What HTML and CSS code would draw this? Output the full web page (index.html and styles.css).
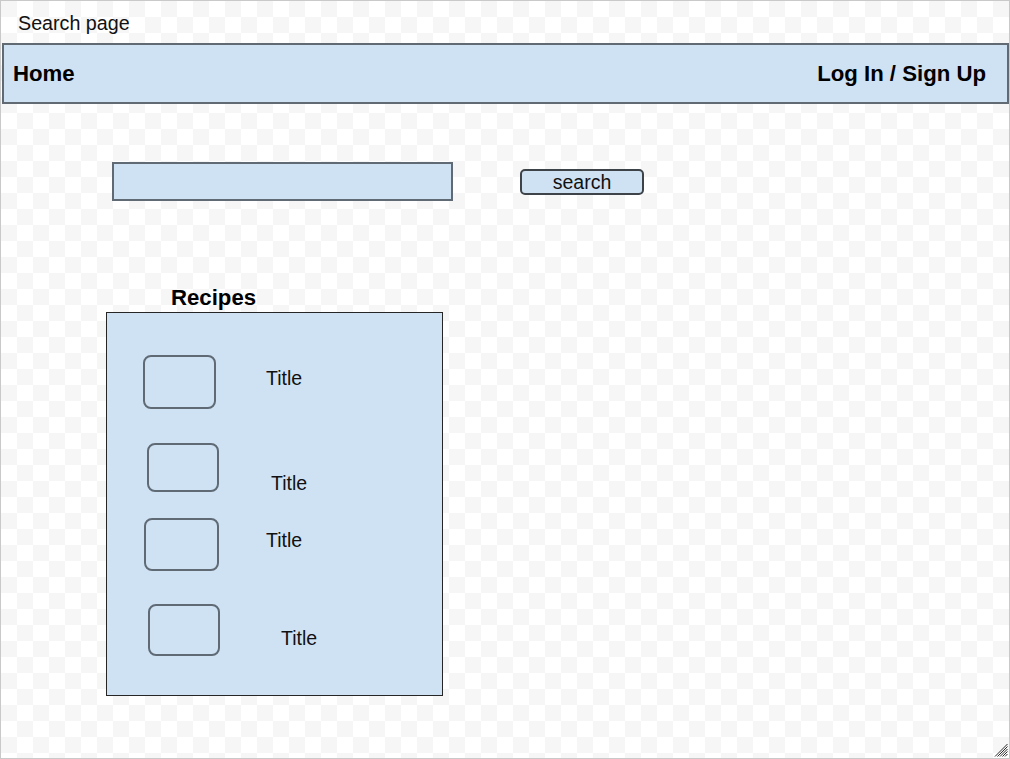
FILE: index.html
```html
<!DOCTYPE html>
<html lang="en">
<head>
<meta charset="utf-8">
<title>Search page</title>
<link rel="stylesheet" href="styles.css">
</head>
<body>
<div class="frame">
  <div class="caption">Search page</div>
  <header class="navbar">
    <span class="nav-link">Home</span>
    <span class="nav-link">Log In / Sign Up</span>
  </header>
  <div class="search-row">
    <div class="search-input"></div>
    <div class="search-btn">search</div>
  </div>
  <div class="recipes-label">Recipes</div>
  <div class="recipes">
    <div class="item item-1"><div class="thumb"></div><div class="title">Title</div></div>
    <div class="item item-2"><div class="thumb"></div><div class="title">Title</div></div>
    <div class="item item-3"><div class="thumb"></div><div class="title">Title</div></div>
    <div class="item item-4"><div class="thumb"></div><div class="title">Title</div></div>
  </div>
  <svg class="grip" width="14" height="14" viewBox="0 0 14 14">
    <g stroke="#2b2b2b" stroke-width="1">
      <line x1="1" y1="13.5" x2="13.5" y2="1"/>
      <line x1="3.5" y1="13.5" x2="13.5" y2="3.5"/>
      <line x1="6" y1="13.5" x2="13.5" y2="6"/>
      <line x1="8.5" y1="13.5" x2="13.5" y2="8.5"/>
      <line x1="11" y1="13.5" x2="13.5" y2="11"/>
    </g>
  </svg>
</div>
</body>
</html>
```

FILE: styles.css
```css
html, body {
  margin: 0;
  padding: 0;
  background: #ffffff;
}

body {
  font-family: "Liberation Sans", Arial, sans-serif;
  color: #111;
}

.frame {
  position: relative;
  box-sizing: border-box;
  width: 1010px;
  height: 759px;
  border: 1px solid #c9c9c9;
  overflow: hidden;
  background-color: #ffffff;
  background-image: conic-gradient(#ffffff 25%, #f6f6f6 0 50%, #ffffff 0 75%, #f6f6f6 0);
  background-size: 32px 32px;
  background-origin: padding-box;
}

.caption {
  margin: 11px 0 0 17px;
  font-size: 19.7px;
  line-height: 22px;
  height: 22px;
}

.navbar {
  box-sizing: border-box;
  margin: 9px 0 0 1px;
  height: 61px;
  border: 2px solid #616a73;
  background: #cfe2f3;
  display: flex;
  align-items: center;
  justify-content: space-between;
  padding: 1px 21px 0 9px;
}

.nav-link {
  font-weight: bold;
  font-size: 22.2px;
  color: #000;
}

.search-row {
  display: flex;
  align-items: center;
  margin: 58px 0 0 111px;
  gap: 67px;
}

.search-input {
  box-sizing: border-box;
  width: 341px;
  height: 39px;
  border: 2px solid #5f6a75;
  background: #cfe2f3;
}

.search-btn {
  box-sizing: border-box;
  width: 124px;
  height: 26px;
  border: 2px solid #3d4349;
  border-radius: 5px;
  background: #cfe2f3;
  font-size: 19.5px;
  line-height: 22px;
  text-align: center;
}

.recipes-label {
  margin: 85px 0 0 170px;
  font-weight: bold;
  font-size: 22.2px;
  line-height: 24px;
  color: #000;
}

.recipes {
  box-sizing: border-box;
  margin: 2px 0 0 105px;
  width: 337px;
  height: 384px;
  border: 1px solid #262626;
  background: #cfe2f3;
  display: flow-root;
}

.item {
  display: flex;
  align-items: flex-start;
}

.thumb {
  box-sizing: border-box;
  border: 2px solid #5f6a75;
  border-radius: 8px;
  flex: none;
}

.title {
  font-size: 19.5px;
  line-height: 22px;
}

.item-1 { margin: 42px 0 0 36px; }
.item-1 .thumb { width: 73px; height: 54px; }
.item-1 .title { margin: 12px 0 0 50px; }

.item-2 { margin: 34px 0 0 40px; }
.item-2 .thumb { width: 72px; height: 49px; }
.item-2 .title { margin: 29px 0 0 52px; }

.item-3 { margin: 24px 0 0 37px; }
.item-3 .thumb { width: 75px; height: 53px; }
.item-3 .title { margin: 11px 0 0 47px; }

.item-4 { margin: 33px 0 0 41px; }
.item-4 .thumb { width: 72px; height: 52px; }
.item-4 .title { margin: 23px 0 0 61px; }

.grip {
  position: absolute;
  right: 1px;
  bottom: 1px;
  display: block;
}
```
